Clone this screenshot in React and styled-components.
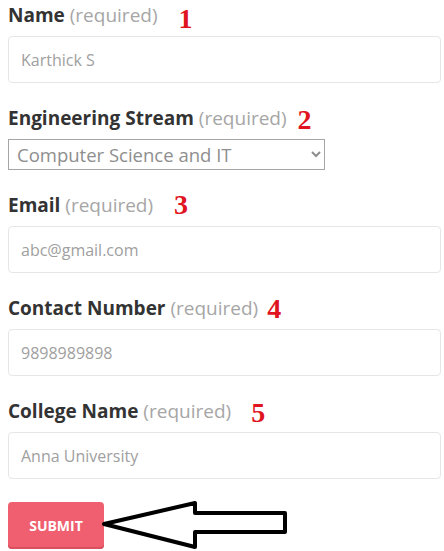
import React from "react";
import styled, { createGlobalStyle } from "styled-components";

const GlobalStyle = createGlobalStyle`
  html, body {
    margin: 0;
    padding: 0;
    background: #ffffff;
  }
  body {
    font-family: "Open Sans", "Lato", sans-serif;
    color: #333333;
  }
`;

const StyledForm = styled.form`
  width: 433px;
  padding: 3px 0 0 8px;
  display: flex;
  flex-direction: column;
`;

const StyledField = styled.div`
  display: flex;
  flex-direction: column;
  margin-bottom: 23px;
`;

const StyledLabelRow = styled.div`
  display: flex;
  align-items: center;
  height: 24px;
  margin-bottom: 9px;
`;

const StyledLabel = styled.label`
  font-size: 19px;
  font-weight: 700;
  color: #333333;
  line-height: 24px;
  white-space: nowrap;
  .required {
    font-weight: 400;
    color: #a6a6a6;
  }
`;

const StyledMarker = styled.span`
  font-family: "Liberation Serif", "Times New Roman", serif;
  font-weight: 700;
  font-size: 28px;
  line-height: 24px;
  color: #e0141e;
  margin-left: ${(props) => props.$gap}px;
  padding-top: ${(props) => props.$drop || 0}px;
`;

const StyledInput = styled.input`
  box-sizing: border-box;
  width: 433px;
  height: 47px;
  padding: 0 12px;
  border: 1px solid #e6e6e6;
  border-radius: 4px;
  background: #ffffff;
  font-family: inherit;
  font-size: 16px;
  color: #333333;
  &::placeholder {
    color: #a0a0a0;
  }
  &:focus {
    outline: none;
  }
`;

const StyledSelect = styled.select`
  box-sizing: border-box;
  width: 317px;
  height: 31px;
  padding: 0 4px;
  border: 1px solid #a5a5a5;
  border-radius: 0;
  background: #ffffff;
  font-family: inherit;
  font-size: 18.5px;
  color: #8e8e8e;
`;

const StyledButtonRow = styled.div`
  display: flex;
  align-items: center;
  margin-top: -2px;
`;

const StyledSubmit = styled.button`
  width: 96px;
  height: 47px;
  border: none;
  border-radius: 4px;
  background: #ef5f6f;
  box-shadow: inset 0 -2px 0 #d9505f;
  color: #ffffff;
  font-family: inherit;
  font-size: 14px;
  font-weight: 700;
  letter-spacing: 0;
  cursor: pointer;
`;

const StyledArrow = styled.svg`
  margin-left: -3px;
  flex-shrink: 0;
`;

const fields = [
  { label: "Name", placeholder: "Karthick S", gap: 21, drop: 8 },
  { label: "Engineering Stream", select: true, gap: 11, drop: 3 },
  { label: "Email", placeholder: "abc@gmail.com", gap: 21 },
  { label: "Contact Number", placeholder: "9898989898", gap: 9, drop: 2 },
  { label: "College Name", placeholder: "Anna University", gap: 20, drop: 3 },
];

function PointerArrow() {
  return (
    <StyledArrow width="188" height="50" viewBox="0 0 188 50">
      <polygon
        points="3,24 94,3 94,13 184,13 184,32 94,32 94,47"
        fill="#ffffff"
        stroke="#000000"
        strokeWidth="4"
        strokeLinejoin="round"
      />
    </StyledArrow>
  );
}

export default function App() {
  return (
    <>
      <GlobalStyle />
      <StyledForm onSubmit={(e) => e.preventDefault()}>
        {fields.map((field, index) => (
          <StyledField key={field.label}>
            <StyledLabelRow>
              <StyledLabel>
                {field.label} <span className="required">(required)</span>
              </StyledLabel>
              <StyledMarker $gap={field.gap} $drop={field.drop}>
                {index + 1}
              </StyledMarker>
            </StyledLabelRow>
            {field.select ? (
              <StyledSelect defaultValue="cs">
                <option value="cs">Computer Science and IT</option>
                <option value="ec">Electronics and Communication</option>
                <option value="me">Mechanical</option>
              </StyledSelect>
            ) : (
              <StyledInput placeholder={field.placeholder} />
            )}
          </StyledField>
        ))}
        <StyledButtonRow>
          <StyledSubmit type="submit">SUBMIT</StyledSubmit>
          <PointerArrow />
        </StyledButtonRow>
      </StyledForm>
    </>
  );
}
